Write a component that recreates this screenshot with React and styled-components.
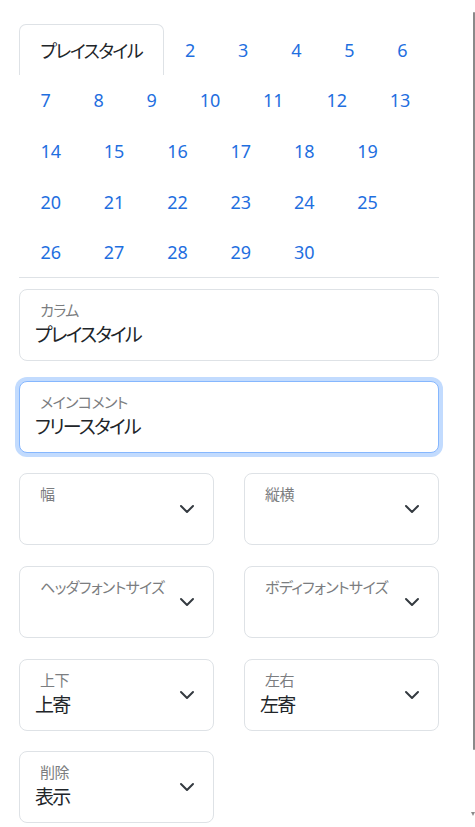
import React from 'react';
import styled, { createGlobalStyle } from 'styled-components';

const GlobalStyle = createGlobalStyle`
  html, body {
    margin: 0;
    padding: 0;
    background: #fff;
  }
  body {
    font-family: "Noto Sans", "Noto Sans CJK JP", sans-serif;
    font-feature-settings: "palt";
    color: #212529;
    overflow: hidden;
  }
`;

const Page = styled.div`
  width: 420px;
  padding: 24px 0 0 19px;
`;

const Tabs = styled.ul`
  display: flex;
  flex-wrap: wrap;
  list-style: none;
  margin: 0;
  padding: 0;
  border-bottom: 1px solid #dee2e6;
`;

const Tab = styled.li`
  box-sizing: border-box;
  height: 50.6px;
  display: flex;
  align-items: center;
  padding: 0 20.4px;
  font-size: 18px;
  letter-spacing: ${(p) => (p.active ? '-1.5px' : '0')};
  color: ${(p) => (p.active ? '#212529' : '#1f6fdf')};
  border: 1px solid ${(p) => (p.active ? '#dee2e6' : 'transparent')};
  border-bottom: none;
  border-radius: 7px 7px 0 0;
  background: #fff;
  cursor: pointer;
`;

const Field = styled.div`
  box-sizing: border-box;
  height: 72px;
  display: flex;
  align-items: center;
  padding: 0 18px 0 15px;
  border: 1px solid ${(p) => (p.focused ? '#86b7fe' : '#dee2e6')};
  border-radius: 8px;
  background: #fff;
  box-shadow: ${(p) => (p.focused ? '0 0 0 4px rgba(13, 110, 253, 0.25)' : 'none')};
`;

const FieldBody = styled.div`
  flex: 1;
  align-self: stretch;
  display: flex;
  flex-direction: column;
  gap: 3px;
  padding-top: 11px;
  min-width: 0;
`;

const Label = styled.div`
  margin-left: 5px;
  font-size: 15px;
  line-height: 19px;
  letter-spacing: -0.6px;
  color: #7b7d80;
  white-space: nowrap;
`;

const Value = styled.div`
  font-size: 19px;
  line-height: 25px;
  letter-spacing: -1.8px;
  color: #212529;
  white-space: nowrap;
`;

const Stack = styled.div`
  display: flex;
  flex-direction: column;
  gap: 20px;
  margin-top: 11px;
`;

const SelectGrid = styled.div`
  display: grid;
  grid-template-columns: 1fr 1fr;
  column-gap: 30px;
  row-gap: 20.8px;
`;

const Scrollbar = styled.div`
  position: fixed;
  top: 12px;
  right: 0;
  width: 2.5px;
  height: 738px;
  background: #8a8a8a;
  border-radius: 1px;
`;

const ScrollArrow = styled.div`
  position: fixed;
  right: 0;
  bottom: 11px;
  width: 0;
  height: 0;
  border-left: 2px solid transparent;
  border-right: 2px solid transparent;
  border-top: 4px solid #8a8a8a;
`;

function Chevron() {
  return (
    <svg width='16' height='16' viewBox='0 0 16 16' fill='none'>
      <path
        d='m2 5 6 6 6-6'
        stroke='#343a40'
        strokeWidth='2'
        strokeLinecap='round'
        strokeLinejoin='round'
      />
    </svg>
  );
}

function TextField({ label, value, focused }) {
  return (
    <Field focused={focused}>
      <FieldBody>
        <Label>{label}</Label>
        <Value>{value}</Value>
      </FieldBody>
    </Field>
  );
}

function SelectField({ label, value }) {
  return (
    <Field>
      <FieldBody>
        <Label>{label}</Label>
        <Value>{value}</Value>
      </FieldBody>
      <Chevron />
    </Field>
  );
}

const pages = Array.from({ length: 29 }, (_, i) => String(i + 2));

const selects = [
  { label: '幅', value: '' },
  { label: '縦横', value: '' },
  { label: 'ヘッダフォントサイズ', value: '' },
  { label: 'ボディフォントサイズ', value: '' },
  { label: '上下', value: '上寄' },
  { label: '左右', value: '左寄' },
  { label: '削除', value: '表示' },
];

export default function App() {
  return (
    <>
      <GlobalStyle />
      <Page>
        <Tabs>
          <Tab active>プレイスタイル</Tab>
          {pages.map((p) => (
            <Tab key={p}>{p}</Tab>
          ))}
        </Tabs>
        <Stack>
          <TextField label='カラム' value='プレイスタイル' />
          <TextField label='メインコメント' value='フリースタイル' focused />
          <SelectGrid>
            {selects.map((s) => (
              <SelectField key={s.label} label={s.label} value={s.value} />
            ))}
          </SelectGrid>
        </Stack>
      </Page>
      <Scrollbar />
      <ScrollArrow />
    </>
  );
}
